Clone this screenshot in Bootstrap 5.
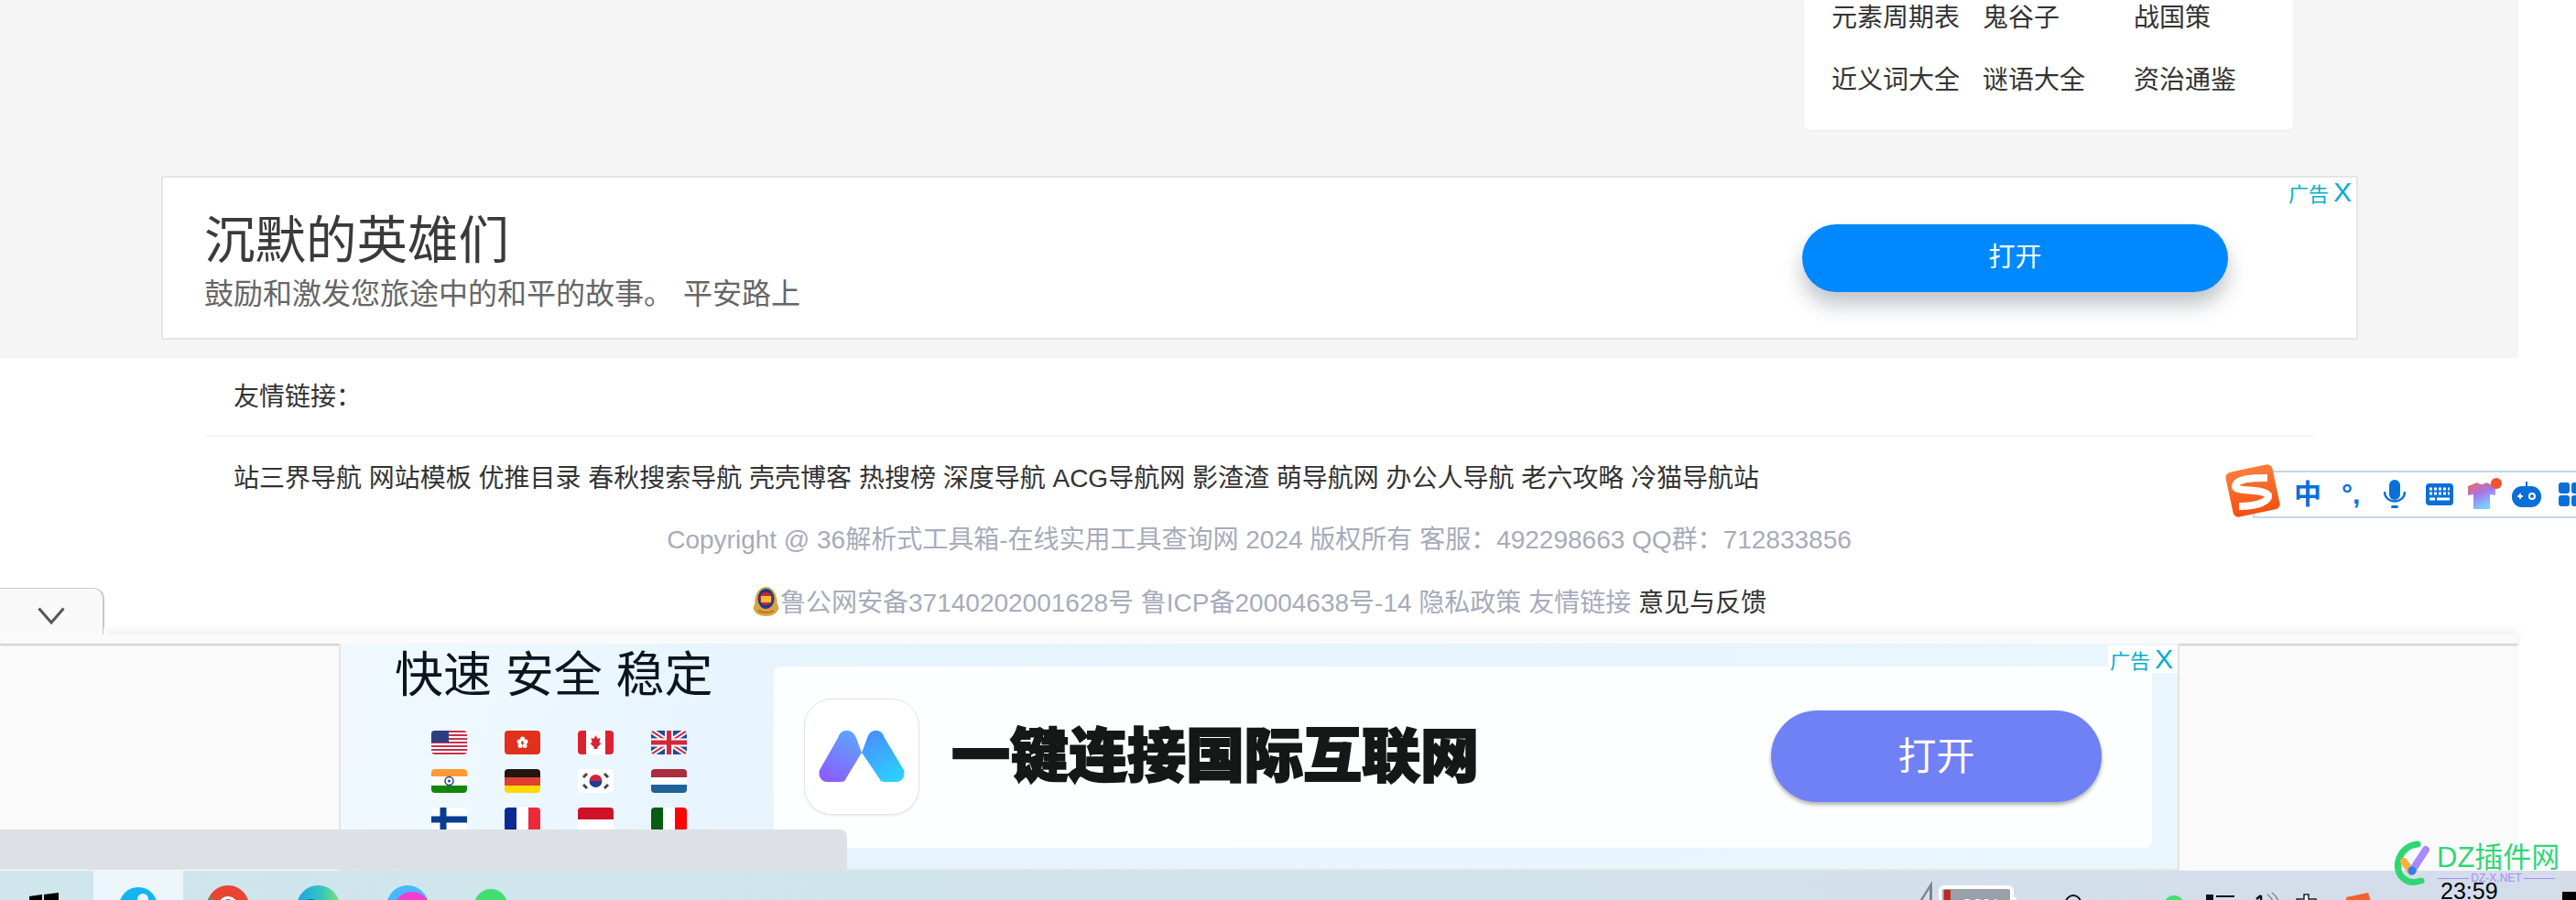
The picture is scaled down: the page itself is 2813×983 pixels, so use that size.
<!DOCTYPE html>
<html lang="zh-CN">
<head>
<meta charset="UTF-8">
<title>36解析式工具箱</title>
<link href="https://cdn.jsdelivr.net/npm/bootstrap@5.3.0/dist/css/bootstrap.min.css" rel="stylesheet">
<style>
html, body { height: 983px; overflow: hidden; }
body { position: relative; margin: 0; background: #fff; color: #333; font-family: "Liberation Sans", "Noto Sans CJK SC", sans-serif; font-size: 28px; }

/* grey page area */
.top-band { width: 2750px; height: 391px; background: #f5f5f5; overflow: hidden; }
.side-box { width: 534px; height: 142px; margin-left: 1970px; padding-left: 30px; border: 0; border-radius: 0 0 6px 6px; box-shadow: 0 1px 2px rgba(0,0,0,.05); }
.side-list { margin-top: -14px; }
.side-list div { height: 68px; line-height: 68px; }
.side-list span { display: inline-block; width: 165px; white-space: nowrap; }

.ad-one { position: relative; width: 2399px; height: 179px; margin: 50px 0 0 176px; padding: 0 140px 0 45px; background: #fff; border: 2px solid #e6e6e6; }
.ad-copy { padding-top: 5px; }
.ad-one h2 { margin: 0 0 -1px; font-size: 55.500px; line-height: 74px; font-weight: 400; color: #3a3a3a; }
.ad-one p { margin: 0; font-size: 32px; line-height: 44px; color: #666; word-spacing: 2px; }
.open-blue { width: 465px; height: 74px; background: #0088ff; border: 0; font-size: 29px; box-shadow: 0 14px 22px rgba(60,70,90,.32); }
.ad-mark { position: absolute; top: 3px; right: 5px; color: #00aecb; font-size: 22px; line-height: 26px; white-space: nowrap; }
.ad-mark b { font-weight: 400; margin-left: 5px; font-size: 30px; }

/* footer */
.foot-area { height: 301px; padding-top: 23px; }
.foot-title { padding-left: 255px; line-height: 40px; }
.foot-line { width: 2301px; height: 2px; margin: 21px 0 26px 225px; background: #f5f5f5; }
.foot-links { padding-left: 255px; line-height: 40px; white-space: nowrap; color: #333; }
.foot-copy { width: 2750px; margin-top: 27px; line-height: 40px; text-align: center; color: #a6abbb; white-space: nowrap; }
.foot-copy + .foot-copy { margin-top: 29px; }
.foot-copy a { color: #a6abbb; text-decoration: none; }
.foot-copy a.dark-link { color: #333; }
.foot-copy svg { vertical-align: -6px; }

/* folded bottom ad */
.fold-tab { position: relative; z-index: 2; width: 114px; height: 51px; margin-top: -50px; background: #f9f9f9; border: 1px solid #c8c8c8; border-width: 1px 2px 0 0; border-radius: 0 12px 0 0; }
.fold-tab svg { position: absolute; left: 41px; top: 20px; }
.fold-tab::after { content: ""; position: absolute; right: -9px; bottom: 0; width: 8px; height: 8px; background: radial-gradient(circle at 100% 0, transparent 7px, #f9f9f9 8px); }
.fold-bar { position: relative; width: 2750px; height: 10px; background: #fafafa; box-shadow: 0 -5px 9px rgba(0,0,0,.06), 0 2px 2px rgba(0,0,0,.18); }
.fold-body { width: 2750px; height: 248px; background: #fafafa; padding-left: 370px; }
.ad-two { position: relative; width: 2010px; height: 248px; background: linear-gradient(100deg, #f1f9ff 0%, #e6f4fe 25%, #e9f6fe 100%); border: 2px solid #e4e4e4; border-width: 0 2px 2px 2px; overflow: hidden; }
.ad-two-left { width: 473px; flex: none; }
.ad-two-left h3 { margin: 5px 0 0 59px; font-size: 53px; line-height: 60px; font-weight: 400; color: #0b1520; white-space: nowrap; }
.flag-grid { display: grid; grid-template-columns: repeat(4, 39px); column-gap: 41px; row-gap: 16px; margin: 30px 0 0 99px; }
.flag-grid svg { display: block; border-radius: 4px; }
.ad-two-panel { width: 1505px; height: 198px; margin-top: 25px; padding: 0 55px 0 33px; background: #fdfeff; border-radius: 8px; }
.app-tile { width: 126px; height: 127px; flex: none; margin-top: -2px; background: #fff; border: 1px solid #e3e4ea; border-radius: 30px; box-shadow: 0 2px 2px rgba(0,0,0,.05); }
.ad-two-panel h4 { margin: -2px 0 0 35px; font-size: 64px; line-height: 80px; font-weight: 900; color: #161817; -webkit-text-stroke: 2px #161817; white-space: nowrap; }
.open-violet { width: 361px; height: 100px; margin-top: -2px; background: #7080f5; border: 0; font-size: 42px; box-shadow: 0 3px 4px rgba(0,0,0,.3); }
.ad-two .ad-mark { top: 2px; right: 0; width: 76px; height: 30px; padding: 2px 0 0 2px; background: #fff; line-height: 26px; }

.grey-strip { position: absolute; left: 0; top: 906px; width: 925px; height: 44px; background: #dde0e4; border-radius: 0 8px 0 0; }

/* task bar */
.task-strip { width: 2813px; height: 33px; overflow: hidden; line-height: 0; background: linear-gradient(90deg, #cfe6ed, #d1e4eb 45%, #d4dcea); }
.task-strip svg { display: block; }
.task-start { width: 102px; flex: none; padding: 24px 0 0 32px; }
.task-slot { width: 98px; flex: none; padding-top: 16px; }
.task-slot svg { margin: 0 auto; }
.task-slot.is-open { background: #ecf5f9; padding-top: 18px; }
.task-slot.is-low { padding: 20px 14px 0 0; }
.task-time { width: 138px; flex: none; padding: 7px 0 0 5px; color: #000; font-size: 25px; line-height: 30px; }
.task-end { width: 15px; height: 10px; margin-top: 23px; background: #000; }

/* sogou bar */
.ime-bar { position: absolute; left: 2460px; top: 514px; width: 353px; height: 52px; padding-left: 43px; background: #fff; border: 2px solid #c5d6ea; border-right: 0; color: #0a6fd8; }
.ime-logo { position: absolute; left: -34px; top: -11px; }
.ime-text { flex: none; font-size: 30px; font-weight: 700; line-height: 46px; width: 52px; }
.ime-dot { flex: none; width: 46px; font-size: 30px; font-weight: 700; line-height: 40px; }
.ime-bar svg { flex: none; }
.ime-mic { margin-right: 22px; }
.ime-keys { margin-right: 16px; }
.ime-shirt { margin-right: 10px; }
.ime-pad { margin-right: 19px; }

/* watermark */
.wm-box { position: absolute; left: 2610px; top: 918px; width: 190px; height: 50px; }
.wm-box svg { position: absolute; left: 0; top: 0; }
.wm-name { position: absolute; left: 51px; top: 0; color: #2fd675; font-size: 31px; line-height: 38px; white-space: nowrap; }
.wm-site { position: absolute; left: 52px; top: 34px; width: 128px; color: #a78bfa; font-size: 12px; line-height: 14px; }
.wm-site::before, .wm-site::after { content: ""; flex: 1; height: 1px; background: #a78bfa; }
.wm-site span { padding: 0 2px; }
</style>
</head>
<body>

<!-- grey page area -->
<div class="top-band">
    <div class="card side-box">
        <div class="side-list">
            <div class="d-flex"><span>元素周期表</span><span>鬼谷子</span><span>战国策</span></div>
            <div class="d-flex"><span>近义词大全</span><span>谜语大全</span><span>资治通鉴</span></div>
        </div>
    </div>
    <div class="ad-one d-flex align-items-center justify-content-between">
        <div class="ad-copy">
            <h2>沉默的英雄们</h2>
            <p>鼓励和激发您旅途中的和平的故事。 平安路上</p>
        </div>
        <button class="btn rounded-pill text-white open-blue">打开</button>
        <div class="ad-mark">广告<b>X</b></div>
    </div>
</div>

<!-- footer -->
<div class="foot-area">
    <div class="foot-title">友情链接：</div>
    <div class="foot-line"></div>
    <div class="foot-links">站三界导航 网站模板 优推目录 春秋搜索导航 壳壳博客 热搜榜 深度导航 ACG导航网 影渣渣 萌导航网 办公人导航 老六攻略 冷猫导航站</div>
    <div class="foot-copy">Copyright @ 36解析式工具箱-在线实用工具查询网 2024 版权所有 客服：492298663 QQ群：712833856</div>
    <div class="foot-copy">
        <svg width="31" height="34" viewBox="0 0 31 34"><path d="M15.500 33c-8 0-13-4-14-9 1-2 1-4 2-5-1-6 3-18 12-18s13 12 12 18c1 1 1 3 2 5-1 5-6 9-14 9z" fill="#d9a441"/><ellipse cx="15.500" cy="14" rx="9" ry="11" fill="#1d3a8a"/><circle cx="15.500" cy="14" r="7" fill="#d5281e"/><rect x="10" y="11" width="11" height="7" fill="#f0c040"/><path d="M7 27q8.500 4 17 0" stroke="#b5772a" stroke-width="2" fill="none"/></svg><a href="#">鲁公网安备37140202001628号</a> <a href="#">鲁ICP备20004638号-14</a> <a href="#">隐私政策</a> <a href="#">友情链接</a> <a href="#" class="dark-link">意见与反馈</a>
    </div>
</div>

<!-- folded bottom ad -->
<div class="fold-tab"><svg width="30" height="19" viewBox="0 0 30 19"><polyline points="1.500,1.500 15,17 28.500,1.500" fill="none" stroke="#555" stroke-width="3"/></svg></div>
<div class="fold-bar"></div>
<div class="fold-body">
    <div class="ad-two d-flex">
        <div class="ad-two-left">
            <h3>快速 安全 稳定</h3>
            <div class="flag-grid">
                <svg width="39" height="26" viewBox="0 0 39 26"><rect width="39" height="26" fill="#fff"/><path d="M0 1h39M0 5h39M0 9h39M0 13h39M0 17h39M0 21h39M0 25h39" stroke="#c8324a" stroke-width="2"/><rect width="19" height="13" fill="#2b3f80"/></svg>
                <svg width="39" height="26" viewBox="0 0 39 26"><rect width="39" height="26" fill="#e2301c"/><g fill="#fff"><circle cx="19.500" cy="9" r="2.500"/><circle cx="23" cy="12" r="2.500"/><circle cx="22" cy="16.500" r="2.500"/><circle cx="17" cy="16.500" r="2.500"/><circle cx="16" cy="12" r="2.500"/></g></svg>
                <svg width="39" height="26" viewBox="0 0 39 26"><rect width="39" height="26" fill="#fff"/><rect width="9" height="26" fill="#dc2231"/><rect x="30" width="9" height="26" fill="#dc2231"/><path d="M19.500 5l2 4 3-1-1 5 2 1-4 4v2h-4v-2l-4-4 2-1-1-5 3 1z" fill="#dc2231"/></svg>
                <svg width="39" height="26" viewBox="0 0 39 26"><rect width="39" height="26" fill="#1f4aa0"/><path d="M0 0L39 26M39 0L0 26" stroke="#fff" stroke-width="6"/><path d="M0 0L39 26M39 0L0 26" stroke="#d6263a" stroke-width="2"/><path d="M19.500 0v26M0 13h39" stroke="#fff" stroke-width="9"/><path d="M19.500 0v26M0 13h39" stroke="#d6263a" stroke-width="5"/></svg>
                <svg width="39" height="26" viewBox="0 0 39 26"><rect width="39" height="26" fill="#fff"/><rect width="39" height="8" fill="#ff9a33"/><rect y="18" width="39" height="8" fill="#138808"/><circle cx="19.500" cy="13" r="4.500" fill="none" stroke="#2b3f90" stroke-width="1.500"/><circle cx="19.500" cy="13" r="1.500" fill="#2b3f90"/></svg>
                <svg width="39" height="26" viewBox="0 0 39 26"><rect width="39" height="9" fill="#231510"/><rect y="9" width="39" height="9" fill="#dd3f33"/><rect y="18" width="39" height="8" fill="#ffd800"/></svg>
                <svg width="39" height="26" viewBox="0 0 39 26"><rect width="39" height="26" fill="#fff"/><path d="M12.500 13a7 7 0 0 1 14 0z" fill="#d3213a"/><path d="M12.500 13a7 7 0 0 0 14 0z" fill="#1d3f96"/><g stroke="#444" stroke-width="3"><path d="M6 9l4-4M29 5l4 4M6 17l4 4M29 21l4-4"/></g></svg>
                <svg width="39" height="26" viewBox="0 0 39 26"><rect width="39" height="9" fill="#ab2c3f"/><rect y="9" width="39" height="8" fill="#fff"/><rect y="17" width="39" height="9" fill="#1e6398"/></svg>
                <svg width="39" height="26" viewBox="0 0 39 26"><rect width="39" height="26" fill="#fff"/><path d="M0 13h39M13 0v26" stroke="#0a3d8f" stroke-width="7"/></svg>
                <svg width="39" height="26" viewBox="0 0 39 26"><rect width="13" height="26" fill="#0a2a94"/><rect x="13" width="13" height="26" fill="#fff"/><rect x="26" width="13" height="26" fill="#ee2a3a"/></svg>
                <svg width="39" height="26" viewBox="0 0 39 26"><rect width="39" height="13" fill="#ce1126"/><rect y="13" width="39" height="13" fill="#fff"/></svg>
                <svg width="39" height="26" viewBox="0 0 39 26"><rect width="13" height="26" fill="#0a5c14"/><rect x="13" width="13" height="26" fill="#fff"/><rect x="26" width="13" height="26" fill="#f00"/></svg>
            </div>
        </div>
        <div class="ad-two-panel d-flex align-items-center">
            <div class="app-tile d-flex align-items-center justify-content-center">
                <svg width="94" height="56" viewBox="0 0 94 56">
                    <defs>
                        <linearGradient id="mLeft" x1="0.700" y1="0" x2="0.200" y2="1"><stop offset="0" stop-color="#5ea4ff"/><stop offset="1" stop-color="#8a5cff"/></linearGradient>
                        <linearGradient id="mRight" x1="0.200" y1="0" x2="0.700" y2="1"><stop offset="0" stop-color="#4a8cff"/><stop offset="1" stop-color="#2bd0ff"/></linearGradient>
                    </defs>
                    <path d="M21 8C24-3 37-3 41 8L47 24 30 52C29 55 27 56 24 56H9C3 56-1 50 1 43z" fill="url(#mLeft)"/>
                    <path d="M53 8C56-3 69-3 72 8L93 43C95 50 91 56 85 56H72C69 56 67 55 66 52L47 24z" fill="url(#mRight)"/>
                </svg>
            </div>
            <h4>一键连接国际互联网</h4>
            <button class="btn rounded-pill text-white open-violet ms-auto">打开</button>
        </div>
        <div class="ad-mark">广告<b>X</b></div>
    </div>
</div>

<!-- task bar -->
<div class="task-strip d-flex">
    <div class="task-start"><svg width="32" height="32" viewBox="0 0 32 32"><path d="M0 4l14-2v13H0zM16 2l16-2v15H16zM0 17h14v13L0 28zM16 17h16v15l-16-2z" fill="#000"/></svg></div>
    <div class="task-slot is-open"><svg width="42" height="42" viewBox="0 0 42 42"><circle cx="21" cy="21" r="21" fill="#12b5ef"/><path d="M6 30C6 14 26 10 32 22c-8-4-16 0-14 10-6 2-12 0-12-2z" fill="#0b5fb0"/><circle cx="26" cy="13" r="6" fill="#eaf6fb"/></svg></div>
    <div class="task-slot"><svg width="46" height="46" viewBox="0 0 46 46"><circle cx="23" cy="23" r="23" fill="#ea4335"/><path d="M23 23L46 23A23 23 0 0 1 23 46z" fill="#fbbc05"/><path d="M23 23L23 46A23 23 0 0 1 2 13z" fill="#34a853"/><circle cx="23" cy="23" r="11" fill="#fff"/><circle cx="23" cy="23" r="8" fill="#4285f4"/></svg></div>
    <div class="task-slot"><svg width="47" height="47" viewBox="0 0 47 47"><defs><linearGradient id="edgeTone" x1="0" y1="0" x2="1" y2="0"><stop offset="0" stop-color="#1ba6e0"/><stop offset="0.600" stop-color="#36c6c0"/><stop offset="1" stop-color="#7ee76a"/></linearGradient></defs><circle cx="23.500" cy="23.500" r="23.500" fill="url(#edgeTone)"/><circle cx="15" cy="30" r="15" fill="#0b6fb8"/></svg></div>
    <div class="task-slot"><svg width="46" height="46" viewBox="0 0 46 46"><circle cx="23" cy="23" r="23" fill="#49b7ff"/><circle cx="8" cy="30" r="12" fill="#8ee88b"/><circle cx="28" cy="28" r="21" fill="#f23fd0"/><circle cx="28" cy="32" r="12" fill="#ff2f66"/></svg></div>
    <div class="task-slot is-low"><svg width="36" height="36" viewBox="0 0 36 36"><circle cx="18" cy="18" r="18" fill="#3fe06f"/><circle cx="12" cy="16" r="2.500" fill="#1c8c45"/><circle cx="24" cy="16" r="2.500" fill="#1c8c45"/></svg></div>
    <div class="d-flex ms-auto">
        <svg width="564" height="33" viewBox="0 0 564 33">
            <polygon points="0,33 14,11 14,33 11,33 11,20 3,33" fill="#80868e"/>
            <rect x="23" y="18" width="78" height="20" rx="4" fill="#98a0a8" stroke="#fff" stroke-width="4"/>
            <rect x="27" y="21" width="7" height="14" fill="#c0281e"/>
            <rect x="102" y="29" width="4" height="8" fill="#fff"/>
            <text x="46" y="45" font-size="21" fill="#fff" font-family="Liberation Sans">20%</text>
            <circle cx="168" cy="35" r="8" fill="none" stroke="#111" stroke-width="2"/>
            <circle cx="278" cy="38" r="11" fill="#3fe06f"/>
            <path d="M314 27h6v6h-6zM324 28h20" stroke="#111" stroke-width="2" fill="#111"/>
            <path d="M373 27v6M368 31l5-4" stroke="#111" stroke-width="2.500" fill="none"/>
            <path d="M380 26q5 4 6 7M385 24q5 4 7 9" stroke="#888" stroke-width="1.500" fill="none"/>
            <path d="M420 26h5v5h8v3h-21v-3h8z" fill="#fff" stroke="#222" stroke-width="1.500"/>
            <path d="M466 29l24-5 3 9h-27z" fill="#f2622c"/>
        </svg>
        <div class="task-time">23:59</div>
        <div class="task-end"></div>
    </div>
</div>

<!-- overlays -->
<div class="grey-strip"></div>

<div class="ime-bar d-flex align-items-center">
    <svg class="ime-logo" width="64" height="62" viewBox="0 0 64 62">
        <defs><linearGradient id="imeTone" x1="0" y1="0" x2="0" y2="1"><stop offset="0" stop-color="#fb7d3c"/><stop offset="1" stop-color="#f4500f"/></linearGradient></defs>
        <rect x="6" y="6" width="52" height="50" rx="6" fill="url(#imeTone)" transform="rotate(-12 32 31)"/>
        <path d="M48 17C34 17 14 17 13 26c0 7 30 2 36 10 1 6-10 12-32 12" fill="none" stroke="#fff" stroke-width="8"/>
    </svg>
    <span class="ime-text">中</span>
    <span class="ime-dot">°,</span>
    <svg width="24" height="32" viewBox="0 0 24 32" class="ime-mic"><rect x="6" y="0" width="12" height="22" rx="6" fill="#0a6fd8"/><path d="M1 13c0 14 22 14 22 0" fill="none" stroke="#0a6fd8" stroke-width="2.500"/><rect x="8" y="28" width="8" height="3" rx="1.500" fill="#0a6fd8"/></svg>
    <svg width="30" height="24" viewBox="0 0 30 24" class="ime-keys"><rect width="30" height="24" rx="4" fill="#0a6fd8"/><path d="M4 6h22M4 11h22" stroke="#fff" stroke-width="3" stroke-dasharray="3 2"/><path d="M4 17h6M12 17h14" stroke="#fff" stroke-width="3"/></svg>
    <svg width="38" height="36" viewBox="0 0 38 36" class="ime-shirt"><defs><linearGradient id="shirtTone" x1="0" y1="0" x2="0.500" y2="1"><stop offset="0" stop-color="#f2694f"/><stop offset="0.500" stop-color="#a874ea"/><stop offset="1" stop-color="#76d4ff"/></linearGradient></defs><path d="M0 9l10-4q5 4 10 0l10 4v10l-6-1v16H6V18l-6 1z" fill="url(#shirtTone)"/><circle cx="31" cy="6" r="6" fill="#f4512c"/></svg>
    <svg width="32" height="28" viewBox="0 0 32 28" class="ime-pad"><rect y="5" width="32" height="23" rx="11" fill="#0a6fd8"/><rect x="15" y="0" width="2" height="6" fill="#0a6fd8"/><path d="M6 16h6M9 13v6" stroke="#fff" stroke-width="2"/><circle cx="22" cy="16" r="3" fill="none" stroke="#fff" stroke-width="2"/></svg>
    <svg width="26" height="26" viewBox="0 0 26 26"><rect width="12" height="12" rx="3" fill="#0a6fd8"/><rect y="14" width="12" height="12" rx="3" fill="#0a6fd8"/><rect x="14" width="12" height="12" rx="3" fill="#0a6fd8"/><rect x="14" y="14" width="12" height="12" rx="3" fill="#0a6fd8"/></svg>
</div>

<div class="wm-box">
    <svg width="48" height="50" viewBox="0 0 48 50">
        <path d="M30 4C10 6 2 30 14 41c7 6 13 5 20 3" fill="none" stroke="#2fd675" stroke-width="7" stroke-linecap="round"/>
        <path d="M15 23l8 11" stroke="#f7b23b" stroke-width="8" stroke-linecap="round"/>
        <path d="M24 33l15-23" stroke="#a78bfa" stroke-width="8" stroke-linecap="round"/>
        <circle cx="24" cy="33" r="4.500" fill="#2f7df6"/>
    </svg>
    <div class="wm-name">DZ插件网</div>
    <div class="wm-site d-flex align-items-center"><span>DZ-X.NET</span></div>
</div>

<script src="https://cdn.jsdelivr.net/npm/bootstrap@5.3.0/dist/js/bootstrap.bundle.min.js"></script>
</body>
</html>
